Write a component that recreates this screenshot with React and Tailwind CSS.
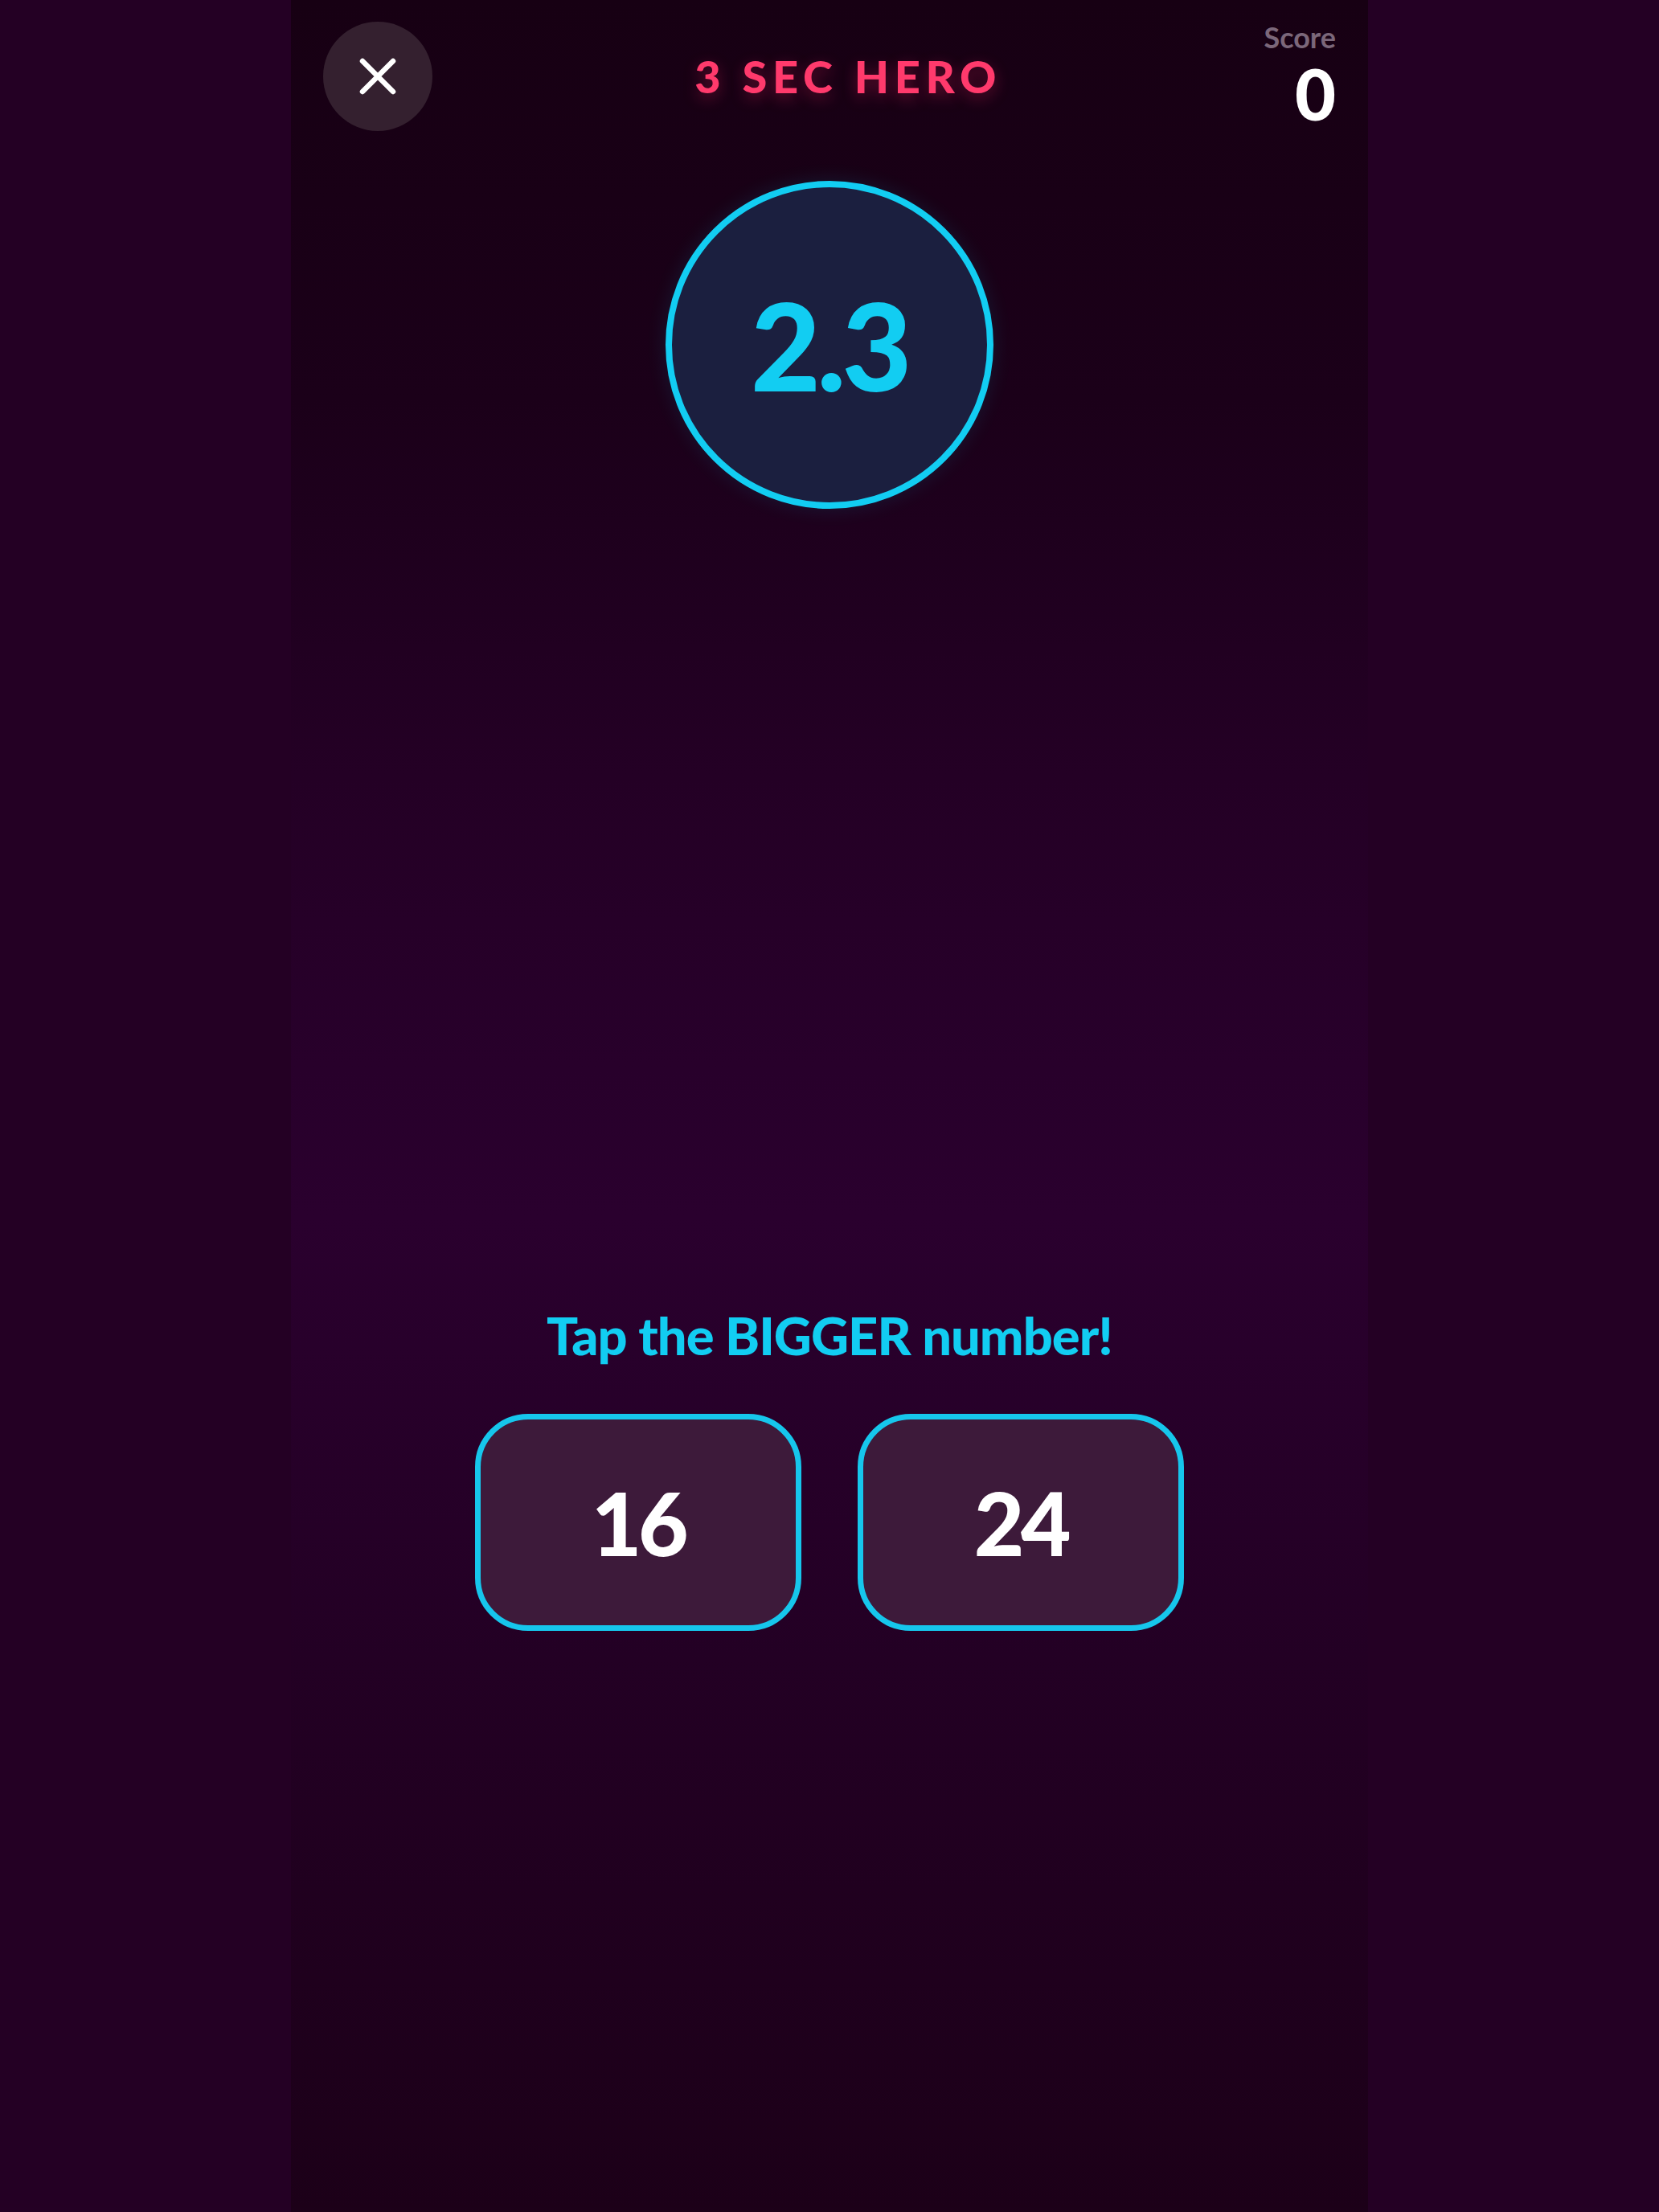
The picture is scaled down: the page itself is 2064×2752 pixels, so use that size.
import React from 'react';

export default function App() {
  const options = [16, 24];

  return (
    <div className="min-h-screen w-full bg-[#240024]" style={{ fontFamily: 'Lato, "Noto Sans", sans-serif' }}>
      <div className="mx-auto flex min-h-screen w-[1340px] flex-col bg-[linear-gradient(to_bottom,#170013_0%,#1b0019_18%,#240025_35%,#2a002e_55%,#230024_75%,#1c0018_100%)]">
        {/* Header */}
        <div className="flex h-[163px] items-start justify-between px-10 pt-[27px]">
          <button className="flex h-[136px] w-[136px] items-center justify-center rounded-full bg-[#34202f]">
            <svg width="46" height="46" viewBox="0 0 46 46" fill="none">
              <path d="M4 4L42 42M42 4L4 42" stroke="white" strokeWidth="6.5" strokeLinecap="round" />
            </svg>
          </button>
          <h1 className="mt-[40px] text-[56px] font-black leading-none tracking-[0.12em] text-[#ff3a6c] [text-shadow:0_6px_18px_rgba(255,40,100,0.35)]">
            3 SEC HERO
          </h1>
          <div className="mt-[1px] flex flex-col items-end">
            <span className="text-[36px] font-bold leading-none text-[#7b677a]">Score</span>
            <span className="mt-[8px] text-[88px] font-black leading-none text-white">0</span>
          </div>
        </div>

        {/* Timer */}
        <div className="mt-[62px] flex justify-center">
          <div className="flex h-[408px] w-[408px] items-center justify-center rounded-full border-[8px] border-[#12cdf2] bg-[#1b1f3f] shadow-[0_0_24px_rgba(18,205,242,0.12)]">
            <span className="text-[150px] font-black leading-none tracking-[-0.03em] text-[#12cdf2]">2.3</span>
          </div>
        </div>

        {/* Prompt */}
        <p className="mt-[992px] text-center text-[65px] font-black leading-[72px] tracking-[-0.015em] text-[#12cdf2]">
          Tap the BIGGER number!
        </p>

        <div className="mt-[62px] flex justify-center gap-[70px]">
          {options.map(n => (
            <button
              key={n}
              className="flex h-[270px] w-[406px] items-center justify-center rounded-[66px] border-[7px] border-[#16c6ec] bg-[#3d1a3a]"
            >
              <span className="text-[108px] font-black leading-none tracking-[-0.04em] text-white">{n}</span>
            </button>
          ))}
        </div>
      </div>
    </div>
  );
}
